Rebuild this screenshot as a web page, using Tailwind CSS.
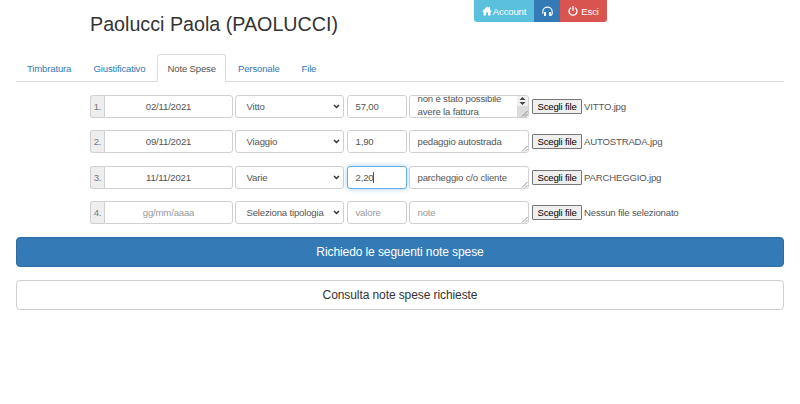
<!DOCTYPE html>
<html lang="it">
<head>
    <meta charset="UTF-8">
    <meta name="viewport" content="width=device-width, initial-scale=1.0">
    <title>Note Spese</title>
    <script src="https://cdn.jsdelivr.net/npm/@tailwindcss/browser@4"></script>
</head>
<body class="bg-white px-4 font-['Liberation_Sans',Arial,sans-serif] text-[9.6px] leading-[13px] tracking-[-0.18px] text-[#555]">
    <!-- Header -->
    <header class="flex h-[54px] items-start pl-[74px]">
        <h1 class="w-[384px] pt-[12px] text-[19.7px] leading-[24px] tracking-normal text-[#333]">Paolucci Paola (PAOLUCCI)</h1>
        <div class="flex h-[22px] overflow-hidden rounded-b-[3px] text-white">
            <button class="flex w-[60px] items-center justify-center gap-px bg-[#5bc0de]">
                <svg class="size-[10px]" viewBox="0 0 20 20" fill="currentColor"><path d="M10 1 0 11h3v8h5v-6h4v6h5v-8h3l-4-4V2h-3v2z"/></svg>
                <span class="pt-px">Account</span>
            </button>
            <button class="flex w-[26px] items-center justify-center bg-[#337ab7]" title="Assistenza">
                <svg class="size-[11px]" viewBox="0 0 20 20" fill="none" stroke="currentColor" stroke-width="2"><path d="M1.500 14v-4a8.500 8 0 0 1 17 0v4q0 2-3 4"/><path d="M5.500 11v7M14.500 11v7" stroke-width="3.500"/></svg>
            </button>
            <button class="flex w-[47px] items-center justify-center gap-[3px] bg-[#d9534f]">
                <svg class="size-[10px]" viewBox="0 0 20 20" fill="none" stroke="currentColor" stroke-width="2.600"><path d="M6 3.500a8 8 0 1 0 8 0M10 0v10"/></svg>
                <span class="pt-px">Esci</span>
            </button>
        </div>
    </header>

    <!-- Tabs -->
    <nav class="flex h-[28px] border-b border-[#ddd] text-[#337ab7]">
        <a href="#" class="w-[67px] pt-[8px] pl-[11px]">Timbratura</a>
        <a href="#" class="w-[74px] pt-[8px] pl-[10.500px]">Giustificativo</a>
        <a href="#" class="h-[28px] w-[69px] rounded-t-[3px] border border-b-0 border-[#ddd] bg-white pt-[7px] pl-[9.500px] text-[#555]">Note Spese</a>
        <a href="#" class="w-[64px] pt-[8px] pl-[12px]">Personale</a>
        <a href="#" class="pt-[8px] pl-[11.500px]">File</a>
    </nav>

    <main>
        <!-- Expense rows -->
        <div id="rows" class="flex flex-col gap-[12.400px] pt-[13px] pl-[74px]"></div>

        <button class="mt-[13px] block h-[30px] w-full rounded-[4px] border border-[#2e6da4] bg-[#337ab7] text-[12px] tracking-[-0.09px] text-white">Richiedo le seguenti note spese</button>
        <button class="mt-[13px] block h-[30px] w-full rounded-[4px] border border-[#d0d0d0] bg-white text-[12px] tracking-[-0.09px] text-[#333]">Consulta note spese richieste</button>
    </main>

    <script>
        const rows = [
            { date: '02/11/2021', type: 'Vitto', value: '57,00', note: 'non è stato possibile avere la fattura', file: 'VITTO.jpg', scroll: true },
            { date: '09/11/2021', type: 'Viaggio', value: '1,90', note: 'pedaggio autostrada', file: 'AUTOSTRADA.jpg' },
            { date: '11/11/2021', type: 'Varie', value: '2,20', note: 'parcheggio c/o cliente', file: 'PARCHEGGIO.jpg', focus: true },
            { type: 'Seleziona tipologia', file: 'Nessun file selezionato' }
        ];

        const field = 'h-full rounded-[3px] border bg-white flex items-center';

        document.getElementById('rows').innerHTML = rows.map((row, index) => `
            <div class="flex h-[23px] items-center whitespace-nowrap">
                <div class="flex h-full w-[14px] items-center justify-center rounded-l-[3px] border border-r-0 border-[#d0d0d0] bg-[#eee] text-[#777]">${index + 1}.</div>
                <div class="flex h-full w-[129px] items-center justify-center rounded-r-[3px] border border-[#d0d0d0] ${row.date ? '' : 'text-[#999]'}">${row.date || 'gg/mm/aaaa'}</div>
                <div class="${field} ml-[2px] w-[109px] justify-between border-[#d0d0d0] pr-[3px] pl-[10.500px]">
                    ${row.type}
                    <svg class="h-[5px] w-[7px]" viewBox="0 0 7 5" fill="none" stroke="#333" stroke-width="1.500"><path d="m1 1 2.500 2.500L6 1"/></svg>
                </div>
                <div class="${field} ml-[3px] w-[60px] pl-[7.500px] ${row.focus ? 'border-[#66afe9] shadow-[0_0_5px_rgba(102,175,233,0.6)]' : 'border-[#d0d0d0]'} ${row.value ? '' : 'text-[#999]'}">
                    ${row.value || 'valore'}${row.focus ? '<i class="h-[11px] w-px bg-[#555]"></i>' : ''}
                </div>
                <div class="${field} relative ml-[2px] w-[120px] overflow-hidden border-[#d0d0d0] pl-[7.500px] ${row.note ? '' : 'text-[#999]'}">
                    <span class="${row.scroll ? 'mb-[3px] w-[92px] shrink-0 whitespace-normal' : ''}">${row.note || 'note'}</span>
                    ${row.scroll ? `
                    <div class="absolute top-0 right-0 flex h-full w-[11px] flex-col bg-[#dcdcdc]">
                        <svg class="h-[10px] w-full bg-[#f1f1f1]" viewBox="0 0 11 10" fill="#444"><path d="m5.500 1 3 3h-6zM5.500 9l3-3h-6z"/></svg>
                    </div>` : ''}
                    <svg class="absolute right-0 bottom-0 size-[7px]" viewBox="0 0 7 7" stroke="#777" stroke-width=".8"><path d="m1 6.500 5.500-5.500M4 6.500 6.500 4"/></svg>
                </div>
                <button class="ml-[3px] flex h-[15px] w-[50px] items-center justify-center rounded-[1px] border border-[#767676] bg-[#efefef] text-black">Scegli file</button>
                <span class="ml-[2px]">${row.file}</span>
            </div>
        `).join('');
    </script>
</body>
</html>
